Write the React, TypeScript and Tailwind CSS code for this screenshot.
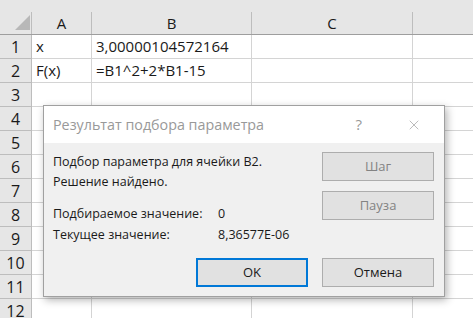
import { X } from 'lucide-react'

const rows = Array.from({ length: 12 }, (_, i) => i + 1)

const cells: Record<number, [string, string]> = {
  1: ['x', '3,00000104572164'],
  2: ['F(x)', '=B1^2+2*B1-15'],
}

function Sheet() {
  return (
    <div className="w-[473px] h-[318px] overflow-hidden bg-white text-[15px] text-[#1a1a1a] font-['Segoe_UI','Open_Sans',sans-serif]">
      <div className="h-[12px] bg-[#e6e6e6]" />
      <div className="flex h-[23px] bg-[#e6e6e6] border-b border-[#9e9e9e]">
        <div className="w-[32px] shrink-0 border-r border-[#bdbdbd] relative">
          <svg className="absolute left-[15px] top-[3px]" width="15" height="15" viewBox="0 0 15 15">
            <polygon points="15,0 15,15 0,15" fill="#b8b8b8" />
          </svg>
        </div>
        <div className="w-[60px] shrink-0 border-r border-[#bdbdbd] flex items-center justify-center">A</div>
        <div className="w-[160px] shrink-0 border-r border-[#bdbdbd] flex items-center justify-center">B</div>
        <div className="w-[161px] shrink-0 border-r border-[#bdbdbd] flex items-center justify-center">C</div>
        <div className="flex-1" />
      </div>
      {rows.map((r) => (
        <div key={r} className="flex h-[24px]">
          <div className="w-[32px] shrink-0 bg-[#e6e6e6] border-r border-b border-[#bdbdbd] flex items-center justify-center text-[16px]">
            {r}
          </div>
          <div className="w-[60px] shrink-0 border-r border-b border-[#d4d4d4] flex items-center px-[4px]">
            {cells[r]?.[0]}
          </div>
          <div className="w-[160px] shrink-0 border-r border-b border-[#d4d4d4] flex items-center px-[4px] whitespace-nowrap">
            {cells[r]?.[1]}
          </div>
          <div className="w-[161px] shrink-0 border-r border-b border-[#d4d4d4]" />
          <div className="flex-1 border-b border-[#d4d4d4]" />
        </div>
      ))}
    </div>
  )
}

function DlgButton({ label, disabled, primary }: { label: string; disabled?: boolean; primary?: boolean }) {
  return (
    <div
      className={
        'w-[112px] h-[29px] flex items-center justify-center bg-[#e1e1e1] text-[13px] ' +
        (primary ? 'border-2 border-[#0078d7] ' : 'border border-[#adadad] ') +
        (disabled ? 'text-[#838383]' : 'text-[#1a1a1a]')
      }
    >
      {label}
    </div>
  )
}

function Dialog() {
  return (
    <div className="absolute left-[43px] top-[105px] w-[402px] h-[192px] border border-[#a0a0a0] bg-[#f0f0f0] shadow-[2px_3px_8px_rgba(0,0,0,0.3)] flex flex-col font-['Segoe_UI','Open_Sans',sans-serif]">
      <div className="h-[37px] bg-white flex items-center pl-[9px] pr-[22px]">
        <span className="flex-1 text-[14.3px] text-[#999999]">Результат подбора параметра</span>
        <span className="text-[15px] text-[#999999] mr-[44px]">?</span>
        <X className="w-[16px] h-[16px] text-[#999999]" strokeWidth={1} />
      </div>
      <div className="flex-1 flex pl-[9px] pr-[10px] pt-[9px] text-[12.5px] text-[#1a1a1a]">
        <div className="flex-1 flex flex-col">
          <div className="h-[20px] flex items-center">Подбор параметра для ячейки B2.</div>
          <div className="h-[20px] flex items-center">Решение найдено.</div>
          <div className="h-[12px]" />
          <div className="h-[21px] flex items-center">
            <span className="w-[165px]">Подбираемое значение:</span>
            <span>0</span>
          </div>
          <div className="h-[21px] flex items-center">
            <span className="w-[165px]">Текущее значение:</span>
            <span>8,36577E-06</span>
          </div>
          <div className="flex-1 flex justify-end items-start pt-[12px] pr-[14px]">
            <DlgButton label="OK" primary />
          </div>
        </div>
        <div className="flex flex-col gap-[10px]">
          <DlgButton label="Шаг" disabled />
          <DlgButton label="Пауза" disabled />
          <div className="mt-[28px]">
            <DlgButton label="Отмена" />
          </div>
        </div>
      </div>
    </div>
  )
}

export default function App() {
  return (
    <div className="relative w-[473px] h-[318px]">
      <Sheet />
      <Dialog />
    </div>
  )
}
